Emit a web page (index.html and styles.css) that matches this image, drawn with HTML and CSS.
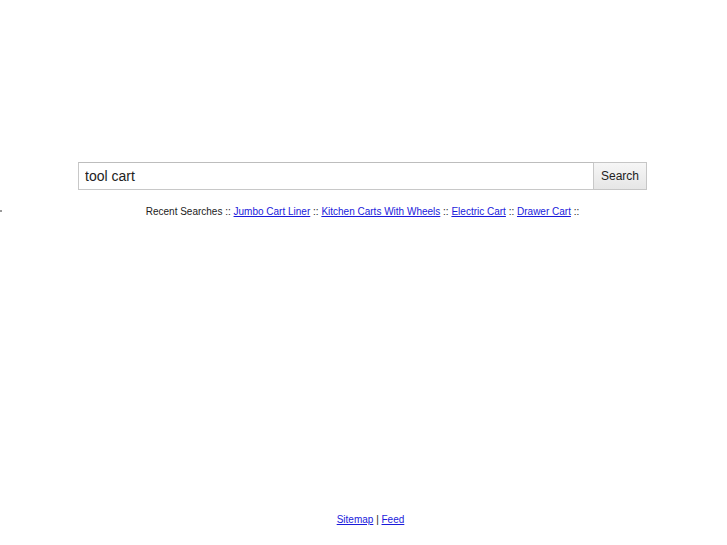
FILE: index.html
```html
<!DOCTYPE html>
<html lang="en">
<head>
  <meta charset="UTF-8" />
  <title>tool cart</title>
  <link rel="stylesheet" href="styles.css">
</head>
<body>
  <span class="dot"></span>

  <div class="page">
    <form class="search-form" onsubmit="return false;">
      <input class="search-input" type="text" value="tool cart">
      <button class="search-btn" type="submit">Search</button>
    </form>

    <p class="recent">
      Recent Searches ::
      <a href="#">Jumbo Cart Liner</a> ::
      <a href="#">Kitchen Carts With Wheels</a> ::
      <a href="#">Electric Cart</a> ::
      <a href="#">Drawer Cart</a> ::
    </p>
  </div>

  <div class="footer">
    <a href="#">Sitemap</a> | <a href="#">Feed</a>
  </div>
</body>
</html>
```

FILE: styles.css
```css
body {
  margin: 0;
  height: 545px;
  font-family: "Liberation Sans", Arial, sans-serif;
  color: #000;
  background: #fff;
  position: relative;
}

.dot {
  position: absolute;
  left: 0;
  top: 210px;
  width: 2px;
  height: 2px;
  background: #999;
}

.page {
  width: 569px;
  margin-left: 78px;
  padding-top: 162px;
}

.search-form {
  display: flex;
  height: 28px;
  margin: 0;
}

.search-input {
  flex: 1;
  box-sizing: border-box;
  height: 28px;
  margin: 0;
  padding: 0 6px;
  border: 1px solid #c8c8c8;
  border-top-color: #bdbdbd;
  font-family: "Liberation Sans", Arial, sans-serif;
  font-size: 14px;
  color: #222;
  outline: none;
}

.search-btn {
  box-sizing: border-box;
  width: 53px;
  height: 28px;
  margin: 0;
  padding: 0;
  border: 1px solid #c6c6c6;
  border-left: none;
  background: linear-gradient(#f6f6f6, #e6e6e6);
  font-family: "Liberation Sans", Arial, sans-serif;
  font-size: 12px;
  color: #222;
  cursor: pointer;
}

.recent {
  margin: 16px 0 0;
  text-align: center;
  font-size: 10px;
  color: #222;
}

.recent a,
.footer a {
  color: #1a1adb;
}

.footer {
  position: absolute;
  left: 0;
  right: 0;
  top: 514px;
  padding-left: 14px;
  text-align: center;
  font-size: 10px;
  color: #222;
}
```
